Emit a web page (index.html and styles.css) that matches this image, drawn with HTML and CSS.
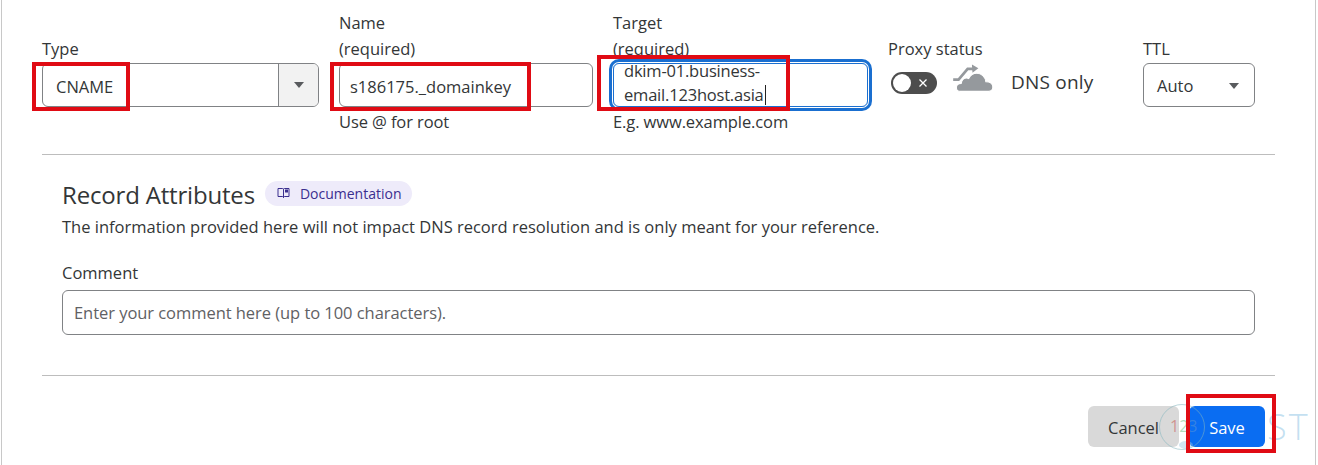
FILE: index.html
```html
<!DOCTYPE html>
<html lang="en">
  <head>
    <meta charset="UTF-8" />
    <title>DNS record</title>
    <link rel="stylesheet" href="styles.css">
  </head>
  <body>
    <div class="panel">
      <form class="record-row">
        <div class="field field-type">
          <div class="label-block"><label>Type</label></div>
          <div class="combo">
            <span class="combo-value">CNAME</span>
            <span class="combo-toggle"><span class="caret"></span></span>
          </div>
        </div>

        <div class="field field-name">
          <div class="label-block"><label>Name</label><label>(required)</label></div>
          <div class="text-box">s186175._domainkey</div>
          <div class="hint">Use @ for root</div>
        </div>

        <div class="field field-target">
          <div class="label-block"><label>Target</label><label>(required)</label></div>
          <div class="text-box target-box">
            <span>dkim-01.business-</span>
            <span>email.123host.asia<i class="text-cursor"></i></span>
          </div>
          <div class="hint">E.g. www.example.com</div>
        </div>

        <div class="field field-proxy">
          <div class="label-block"><label>Proxy status</label></div>
          <div class="proxy-state">
            <span class="toggle">
              <span class="toggle-knob"></span>
              <svg class="toggle-x" width="10" height="10" viewBox="0 0 10 10"><path d="M1.500 1.500l7 7M8.500 1.500l-7 7" /></svg>
            </span>
            <svg class="cloud" width="42" height="30" viewBox="0 0 39 28">
              <path class="cloud-arrow" d="M1 15.500h5l8.500-10h6" />
              <path class="cloud-head" d="M18.500 1.500l6 3.500-5.500 4z" />
              <path class="cloud-body" d="M8 26.500c-3 0-4-2-4-3.500 0-2.500 2-4 4.500-4 .5-3 2.500-5 5-5 1 0 1.500.3 2 .5 1.500-3 4-5 7.500-5 4.500 0 8 3.500 8.500 8 3 0 6.500 1.500 6.500 5 0 2.500-1.500 4-4 4z" />
            </svg>
            <span class="proxy-text">DNS only</span>
          </div>
        </div>

        <div class="field field-ttl">
          <div class="label-block"><label>TTL</label></div>
          <div class="ttl-select">
            <span>Auto</span>
            <span class="caret"></span>
          </div>
        </div>
      </form>

      <hr class="divider" />

      <section class="attributes">
        <div class="attributes-head">
          <h2>Record Attributes</h2>
          <a class="doc-pill">
            <svg width="13" height="12" viewBox="0 0 13 12"><path class="doc-page" d="M1 1.500h4.500c.6 0 1 .4 1 1v8c0-.5-.4-1-1-1H1zM12 1.500H7.500c-.6 0-1 .4-1 1v8c0-.5.4-1 1-1H12z" /><path class="doc-fill" d="M8 2.500h3v3H8z" /></svg>
            Documentation
          </a>
        </div>
        <p class="attributes-note">The information provided here will not impact DNS record resolution and is only meant for your reference.</p>
        <label class="comment-label">Comment</label>
        <div class="comment-box">Enter your comment here (up to 100 characters).</div>
      </section>

      <hr class="divider" />

      <div class="actions">
        <button type="button" class="btn btn-cancel">Cancel</button>
        <button type="button" class="btn btn-save">Save</button>
      </div>

      <div class="watermark">
        <span class="watermark-ring"></span>
        <span class="watermark-blob"></span>
        <span class="watermark-num"><b class="num-a">1</b><b class="num-b">2</b><b class="num-c">3</b></span>
        <span class="watermark-text">ST</span>
      </div>

      <div class="mark mark-type"></div>
      <div class="mark mark-name"></div>
      <div class="mark mark-target"></div>
      <div class="mark mark-save"></div>
    </div>
  </body>
</html>
```

FILE: styles.css
```css
body {
  margin: 0;
  font-family: "Open Sans", "Noto Sans", Arial, sans-serif;
  font-size: 16.500px;
  color: #333637;
  background: #fff;
  overflow: hidden;
}
.panel {
  position: relative;
  box-sizing: border-box;
  width: 1315px;
  height: 465px;
  margin-left: 1px;
  padding: 0 40px;
  border-left: 1px solid #c8c8c8;
  border-right: 1px solid #c8c8c8;
}
.record-row {
  display: flex;
  gap: 20px;
  height: 154px;
}
.field {
  display: flex;
  flex-direction: column;
}
.field-type { width: 277px; }
.field-name { width: 254px; }
.field-target { width: 255px; }
.field-proxy { width: 235px; }
.field-ttl { width: 112px; }
.label-block {
  display: flex;
  flex-direction: column;
  justify-content: flex-end;
  height: 63px;
  padding-bottom: 1px;
  box-sizing: border-box;
  line-height: 26px;
}
.combo {
  display: flex;
  height: 44px;
  border: 1px solid #808285;
  border-radius: 6px;
  box-sizing: border-box;
  overflow: hidden;
}
.combo-value {
  flex: 1;
  padding-left: 13px;
  line-height: 45px;
}
.combo-toggle {
  display: flex;
  align-items: center;
  justify-content: center;
  width: 39px;
  background: #f2f2f2;
  border-left: 1px solid #808285;
}
.caret {
  width: 0;
  height: 0;
  border-left: 5.500px solid transparent;
  border-right: 5.500px solid transparent;
  border-top: 6px solid #595b5e;
}
.text-box {
  box-sizing: border-box;
  height: 44px;
  padding-left: 10px;
  border: 1px solid #808285;
  border-radius: 6px;
  line-height: 45px;
}
.target-box {
  display: flex;
  flex-direction: column;
  line-height: 24px;
  letter-spacing: -0.2px;
  border-color: #1a6fd0;
  box-shadow: 0 0 0 1px #fff, 0 0 0 4px #1a6fd0;
}
.target-box span:first-child {
  margin-top: -5px;
}
.text-cursor {
  display: inline-block;
  width: 1px;
  height: 20px;
  margin-left: 1px;
  vertical-align: -4px;
  background: #222;
}
.hint {
  margin-top: 3px;
  line-height: 24px;
  letter-spacing: -0.1px;
}
.proxy-state {
  display: flex;
  align-items: flex-start;
  height: 44px;
}
.toggle {
  display: flex;
  align-items: center;
  box-sizing: border-box;
  width: 46px;
  height: 22px;
  margin: 9px 0 0 3px;
  padding: 2px;
  background: #4d4d4d;
  border-radius: 11px;
}
.toggle-knob {
  width: 18px;
  height: 18px;
  border-radius: 50%;
  background: #fff;
}
.toggle-x {
  margin-left: 7px;
  fill: none;
  stroke: #fff;
  stroke-width: 1.300;
}
.cloud {
  margin: 0 0 0 15px;
}
.cloud-arrow {
  fill: none;
  stroke: #95999d;
  stroke-width: 2.500;
}
.cloud-head,
.cloud-body {
  fill: #95999d;
}
.cloud-body {
  stroke: #fff;
  stroke-width: 1;
}
.proxy-text {
  margin-left: 17px;
  line-height: 39px;
  font-size: 19px;
  letter-spacing: 0.2px;
}
.ttl-select {
  display: flex;
  align-items: center;
  justify-content: space-between;
  box-sizing: border-box;
  height: 44px;
  padding: 1px 15px 0 13px;
  border: 1px solid #808285;
  border-radius: 6px;
}
.divider {
  margin: 0;
  width: 1233px;
  height: 1px;
  border: none;
  background: #bdbdbd;
}
.attributes {
  box-sizing: border-box;
  height: 220px;
  padding: 19px 0 0 20px;
}
.attributes-head {
  display: flex;
  align-items: center;
  gap: 10px;
  height: 40px;
}
.attributes-head h2 {
  margin: 0;
  font-size: 24px;
  font-weight: 400;
  letter-spacing: -0.18px;
}
.doc-pill {
  display: flex;
  align-items: center;
  gap: 10px;
  box-sizing: border-box;
  height: 25px;
  margin-top: -2px;
  padding: 0 10px 0 12px;
  border-radius: 13px;
  background: #eeebfa;
  color: #3b2f8f;
  font-size: 14px;
}
.doc-page {
  fill: none;
  stroke: #3b2f8f;
  stroke-width: 1;
}
.doc-fill {
  fill: #3b2f8f;
}
.attributes-note {
  margin: 1px 0 0;
  line-height: 24px;
}
.comment-label {
  display: block;
  margin-top: 22px;
  line-height: 24px;
}
.comment-box {
  box-sizing: border-box;
  width: 1193px;
  height: 45px;
  margin-top: 5px;
  padding-left: 11px;
  border: 1px solid #808285;
  border-radius: 6px;
  line-height: 44px;
  color: #5f6164;
  letter-spacing: -0.05px;
}
.actions {
  display: flex;
  justify-content: flex-end;
  width: 1223px;
  gap: 10px;
  padding-top: 30px;
}
.btn {
  height: 41px;
  padding-top: 3px;
  border: none;
  border-radius: 6px;
  font: inherit;
}
.btn-cancel {
  width: 91px;
  background: #d9d9d9;
  color: #333637;
}
.btn-save {
  width: 76px;
  background: #0a6df2;
  color: #fff;
}
.mark {
  position: absolute;
  box-sizing: border-box;
  border: 4px solid #e00b14;
}
.mark-type { left: 30px; top: 62px; width: 98px; height: 49px; }
.mark-name { left: 328px; top: 62px; width: 201px; height: 49px; }
.mark-target { left: 595px; top: 55px; width: 193px; height: 56px; }
.mark-save { left: 1184px; top: 394px; width: 90px; height: 59px; }
.watermark {
  position: absolute;
  left: 1155px;
  top: 402px;
  width: 158px;
  height: 50px;
  pointer-events: none;
}
.watermark-ring {
  position: absolute;
  left: 2px;
  top: 2px;
  width: 44px;
  height: 44px;
  border: 1px solid rgba(130, 180, 190, 0.55);
  border-radius: 50%;
}
.watermark-blob {
  position: absolute;
  left: 22px;
  top: 39px;
  width: 14px;
  height: 8px;
  border-radius: 50%;
  background: rgba(150, 195, 225, 0.45);
}
.watermark-num {
  position: absolute;
  left: 13px;
  top: 13px;
  font-size: 16px;
}
.watermark-num b {
  font-weight: 400;
}
.num-a { color: rgba(200, 90, 80, 0.55); }
.num-b { color: rgba(110, 190, 130, 0.55); }
.num-c { color: rgba(90, 150, 210, 0.55); }
.watermark-text {
  position: absolute;
  left: 110px;
  top: 0;
  font-size: 36px;
  font-weight: 300;
  letter-spacing: 2px;
  color: rgba(170, 210, 235, 0.7);
}
```
